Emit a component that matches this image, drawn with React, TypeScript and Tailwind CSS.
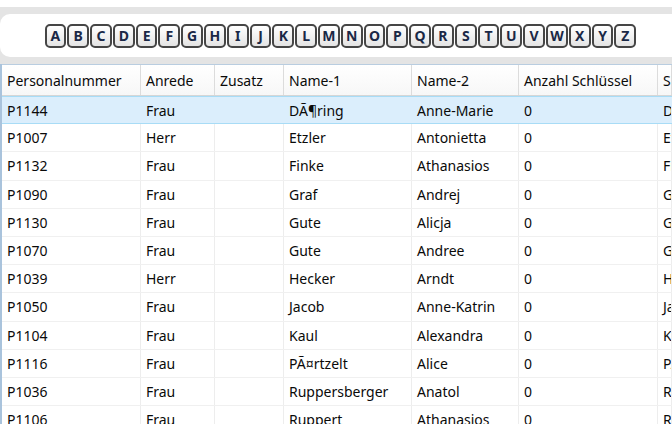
import React from "react";

const letters = "ABCDEFGHIJKLMNOPQRSTUVWXYZ".split("");

const rows: [string, string, string, string, string, string][] = [
  ["P1144", "Frau", "", "DÃ¶ring", "Anne-Marie", "0"],
  ["P1007", "Herr", "", "Etzler", "Antonietta", "0"],
  ["P1132", "Frau", "", "Finke", "Athanasios", "0"],
  ["P1090", "Frau", "", "Graf", "Andrej", "0"],
  ["P1130", "Frau", "", "Gute", "Alicja", "0"],
  ["P1070", "Frau", "", "Gute", "Andree", "0"],
  ["P1039", "Herr", "", "Hecker", "Arndt", "0"],
  ["P1050", "Frau", "", "Jacob", "Anne-Katrin", "0"],
  ["P1104", "Frau", "", "Kaul", "Alexandra", "0"],
  ["P1116", "Frau", "", "PÃ¤rtzelt", "Alice", "0"],
  ["P1036", "Frau", "", "Ruppersberger", "Anatol", "0"],
  ["P1106", "Frau", "", "Ruppert", "Athanasios", "0"],
];

const headers = ["Personalnummer", "Anrede", "Zusatz", "Name-1", "Name-2", "Anzahl Schlüssel", "Suchname"];

export default function App() {
  return (
    <div
      className="w-[672px] h-[424px] overflow-hidden bg-white text-[14px] text-[#0a0a0a]"
      style={{ fontFamily: '"Noto Sans", "Open Sans", sans-serif' }}
    >
      <div className="h-[7px] bg-white" />
      <div className="bg-[#e4e4e4] pt-[7px] pb-[7px]">
        <div className="h-[43px] bg-white rounded-l-[10px] flex items-center pl-[44px] pt-[1px]">
          {letters.map((l) => (
            <div key={l} className="w-[22.8px] px-[0.5px] shrink-0">
              <div className="h-[24px] rounded-[5px] border-2 border-[#454545] bg-gradient-to-b from-white to-[#e4e4e4] flex items-center justify-center font-bold text-[14px] text-[#1a2846] leading-none">
                {l}
              </div>
            </div>
          ))}
        </div>
      </div>
      <div className="border-l-2 border-[#a9c3dc]">
        <div className="grid grid-cols-[139px_74px_69px_128px_107px_139px_1fr] h-[32px] border-t border-[#b9cde0] border-b border-b-[#d6d6d6] bg-gradient-to-b from-white to-[#f7f7f7]">
          {headers.map((h) => (
            <div
              key={h}
              className="flex items-center pl-[5px] border-r border-[#dcdcdc] whitespace-nowrap overflow-hidden"
            >
              {h}
            </div>
          ))}
        </div>
        {rows.map((r, ri) => {
          const sel = ri === 0;
          const cells = [...r, r[3]];
          return (
            <div
              key={r[0]}
              className={
                "grid grid-cols-[139px_74px_69px_128px_107px_139px_1fr] h-[28.2px] border-b " +
                (sel ? "bg-[#dbeefc] border-[#a8dcf6] border-t" : "bg-white border-[#f0f0f0]")
              }
            >
              {cells.map((c, ci) => (
                <div
                  key={ci}
                  className={
                    "flex items-center pl-[5px] whitespace-nowrap overflow-hidden border-r " +
                    (sel ? "border-[#dbeefc]" : "border-[#ededed]")
                  }
                >
                  {c}
                </div>
              ))}
            </div>
          );
        })}
      </div>
    </div>
  );
}
